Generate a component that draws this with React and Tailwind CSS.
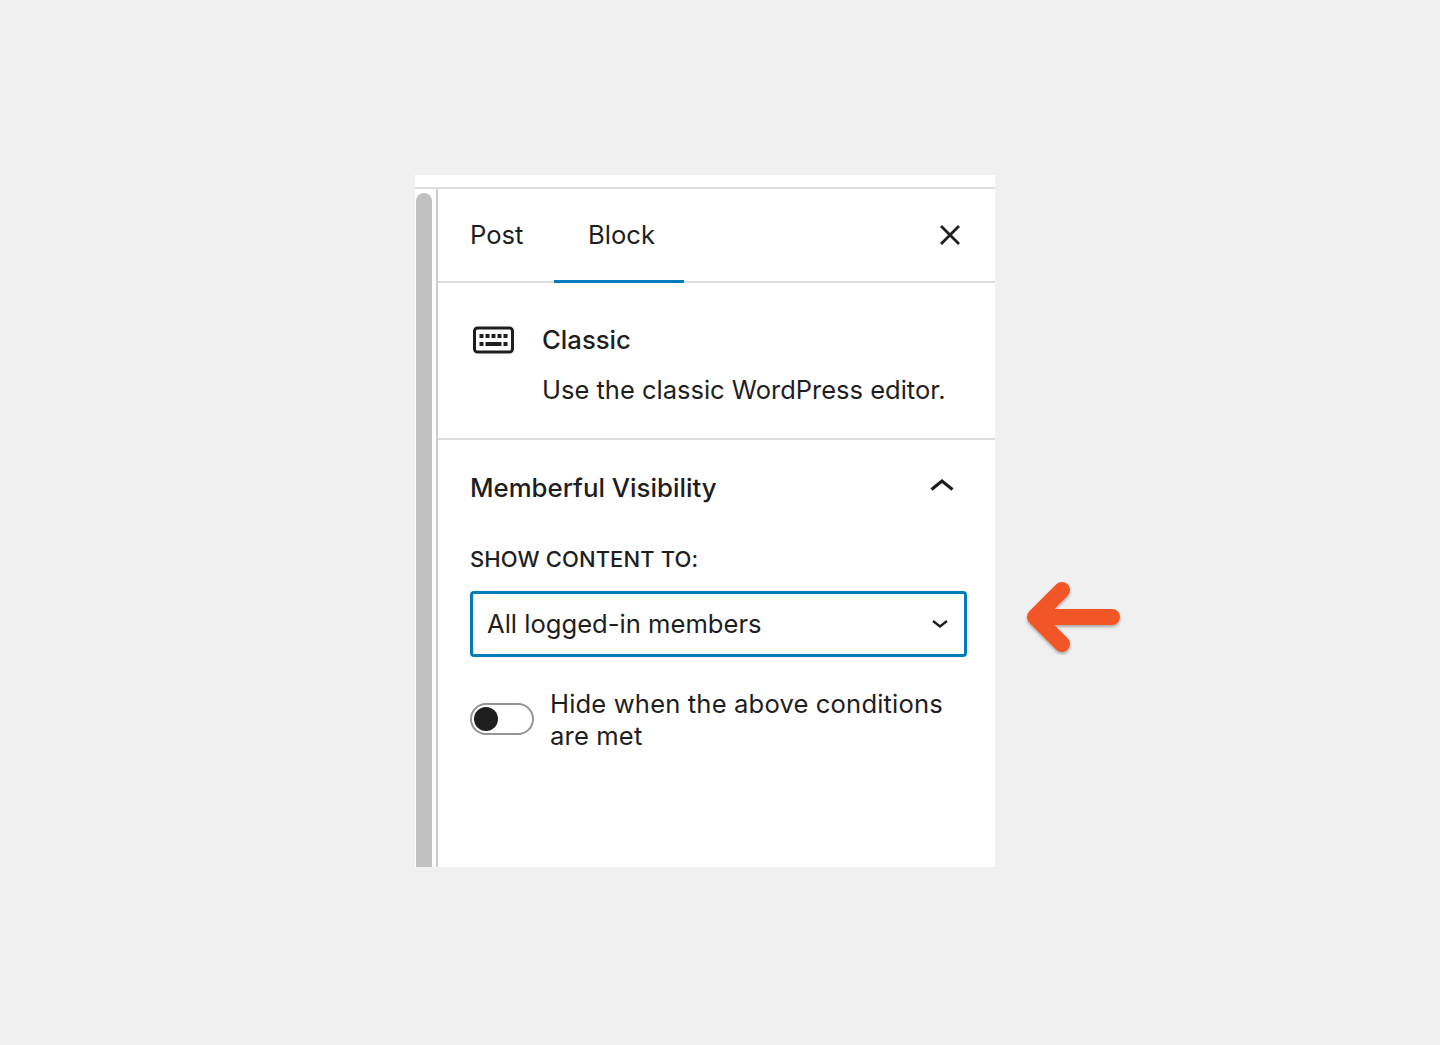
const font = { fontFamily: '"Inter", "Liberation Sans", sans-serif' };

function Keyboard() {
  return (
    <svg width="41" height="28" viewBox="0 0 41 28" className="block" aria-hidden="true">
      <rect x="1.5" y="2" width="38" height="24" rx="3" fill="none" stroke="#1e1e1e" strokeWidth="3" />
      <g fill="#1e1e1e">
        <rect x="6.5" y="8" width="4" height="4" />
        <rect x="12.5" y="8" width="4" height="4" />
        <rect x="18.5" y="8" width="4" height="4" />
        <rect x="24.5" y="8" width="4" height="4" />
        <rect x="30.5" y="8" width="4" height="4" />
        <rect x="6.5" y="16" width="4" height="4" />
        <rect x="12.5" y="16" width="16" height="4" />
        <rect x="30.5" y="16" width="4" height="4" />
      </g>
    </svg>
  );
}

function Arrow() {
  return (
    <svg width="100" height="76" viewBox="0 0 100 76" className="block" aria-hidden="true">
      <defs>
        <filter id="arrowShadow" x="-20%" y="-20%" width="140%" height="150%">
          <feDropShadow dx="0" dy="2" stdDeviation="1.5" floodColor="#000" floodOpacity="0.3" />
        </filter>
      </defs>
      <g fill="none" stroke="#f25528" strokeWidth="16" strokeLinecap="round" strokeLinejoin="round" filter="url(#arrowShadow)">
        <path d="M38 11 L11 38 L38 65" />
        <path d="M14 38 L88 38" />
      </g>
    </svg>
  );
}

export default function App() {
  return (
    <div className="min-h-[1045px] bg-[#f0f0f0] flex justify-center pt-[175px] text-[#1e1e1e]" style={font}>
      <div className="relative w-[580px] h-[692px] mr-[30px] bg-white flex flex-col">
        <div className="h-[14px] shrink-0 border-b-2 border-[#dddddd]" />
        <div className="flex flex-1 min-h-0">
          <div className="w-[23px] shrink-0 border-r-2 border-[#cccccc] pl-px pt-[4px]">
            <div className="w-[16px] h-full bg-[#c1c1c1] rounded-t-[8px]" />
          </div>
          <div className="flex-1 min-w-0 flex flex-col">
            <div className="h-[94px] shrink-0 border-b-2 border-[#dddddd] flex items-start relative">
              <div className="w-[116px] pl-[32px] h-[92px] flex items-center text-[25.6px] leading-[32px] pb-[1px]">Post</div>
              <div className="relative w-[130px] h-[94px] flex items-center justify-center text-[25.6px] leading-[32px] border-b-[3px] border-[#007cba] pl-[5px]">Block</div>
              <svg width="24" height="24" viewBox="0 0 24 24" className="absolute left-[500px] top-[34px]" aria-hidden="true">
                <path d="M3 3 L21 21 M21 3 L3 21" stroke="#1e1e1e" strokeWidth="2.8" fill="none" />
              </svg>
            </div>
            <div className="h-[157px] shrink-0 border-b-2 border-[#dddddd] flex pl-[35px] pt-[43px]">
              <div className="w-[69px] shrink-0"><Keyboard /></div>
              <div className="-mt-[2px]">
                <div className="text-[25.7px] leading-[32px] font-medium">Classic</div>
                <div className="text-[25.5px] leading-[32px] mt-[18px] whitespace-nowrap">Use the classic WordPress editor.</div>
              </div>
            </div>
            <div className="flex-1 pl-[32px] pr-[28px]">
              <div className="flex justify-between items-start pt-[32px]">
                <div className="text-[25.8px] leading-[32px] font-medium">Memberful Visibility</div>
                <svg width="26" height="14" viewBox="0 0 26 14" className="mr-[12px] mt-[6px]" aria-hidden="true">
                  <path d="M2.5 11.5 L13 3 L23.5 11.5" stroke="#1e1e1e" strokeWidth="3.2" fill="none" />
                </svg>
              </div>
              <div className="mt-[39px] text-[22px] leading-[32px] font-medium tracking-[0.1px] uppercase">Show content to:</div>
              <div className="mt-[16px] h-[66px] border-[3px] border-[#007cba] rounded-[4px] flex items-center justify-between pl-[14px] pr-[15px]">
                <span className="text-[25.6px] leading-[32px]">All logged-in members</span>
                <svg width="18" height="12" viewBox="0 0 18 12" aria-hidden="true">
                  <path d="M2 3 L9 8.5 L16 3" stroke="#1e1e1e" strokeWidth="2.4" fill="none" />
                </svg>
              </div>
              <div className="mt-[31px] flex gap-[16px]">
                <div className="mt-[15px] w-[64px] h-[32px] shrink-0 rounded-full border-2 border-[#949494] bg-white flex items-center pl-[2px]">
                  <div className="w-[24px] h-[24px] rounded-full bg-[#1e1e1e]" />
                </div>
                <div className="text-[25.6px] leading-[32px] tracking-[0.15px]">Hide when the above conditions are met</div>
              </div>
            </div>
          </div>
        </div>
        <div className="absolute left-[609px] top-[404px]"><Arrow /></div>
      </div>
    </div>
  );
}
